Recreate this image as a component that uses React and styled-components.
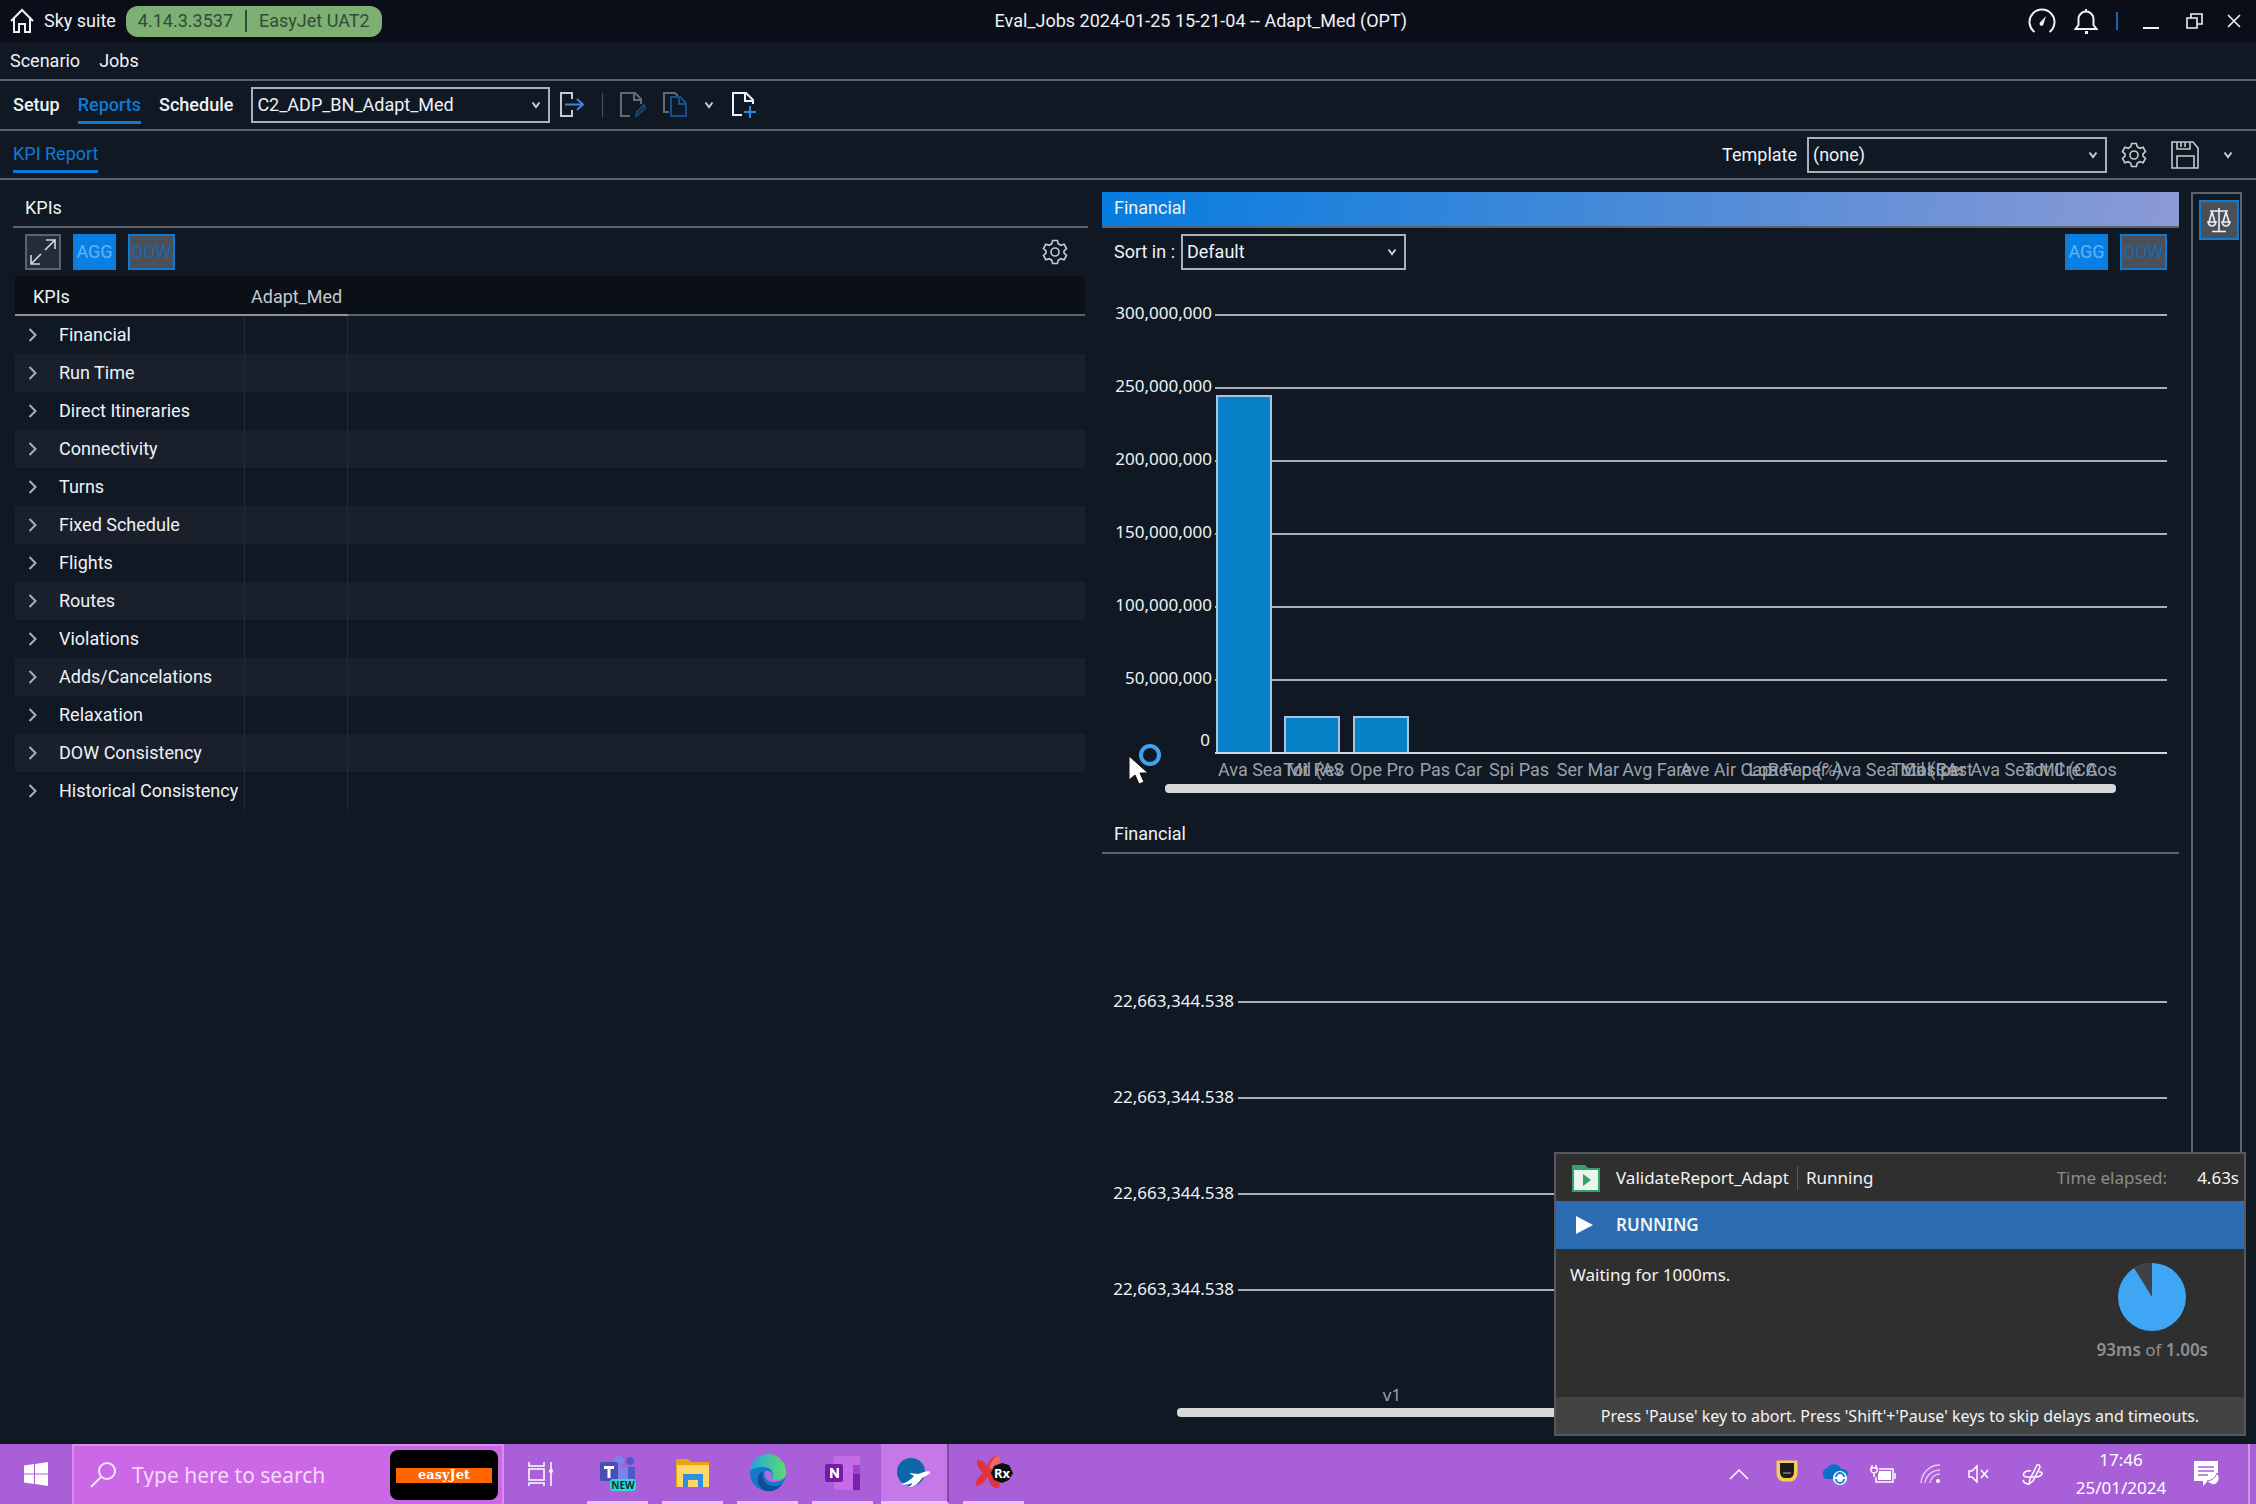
import React from "react";
import styled, { createGlobalStyle, css } from "styled-components";

const UI = 'Roboto, "Liberation Sans", sans-serif';
const OS = '"Noto Sans", "Open Sans", sans-serif';
const c = {
  bg: "#101824",
  title: "#0b0e18",
  line: "#5a626b",
  text: "#eef2f6",
  blue: "#0f7ad8",
  bar: "#0680c6",
  grid: "#a9afb8",
  dim: "#9aa1aa",
};

const Global = createGlobalStyle`
  *, *::before, *::after { box-sizing: border-box; }
  body { margin: 0; background: ${c.bg}; color: ${c.text}; font: 18px/24px ${UI}; }
  button, select, input { font: inherit; color: inherit; }
  button { background: none; border: 0; padding: 0; }
  svg { display: block; flex: none; }
`;

const Page = styled.div`
  min-height: 100vh;
  display: flex;
  flex-direction: column;
`;

/* ---------- title bar ---------- */
const TitleBar = styled.header`
  height: 42px;
  padding: 0 14px 0 10px;
  background: ${c.title};
  display: grid;
  grid-template-columns: auto 1fr auto;
  align-items: center;
`;
const TitleSide = styled.div`
  display: flex;
  align-items: center;
  gap: ${(p) => p.$gap}px;
`;
const WindowTitle = styled.h1`
  margin: 0;
  padding-right: 8px;
  text-align: center;
  font-size: 18px;
  line-height: 24px;
  font-weight: 400;
`;
const Version = styled.div`
  height: 31px;
  padding: 0 12px;
  border-radius: 12px;
  background: #7db072;
  color: #2f4c38;
  display: flex;
  align-items: center;
  gap: 12px;
`;
const Rule = styled.span`
  width: ${(p) => p.$w || 2}px;
  height: ${(p) => p.$h}px;
  background: ${(p) => p.$color};
`;
const IconButton = styled.button`
  display: grid;
  place-items: center;
  opacity: ${(p) => (p.$off ? 0.6 : 1)};
`;

/* ---------- bars ---------- */
const Bar = styled.nav`
  height: ${(p) => p.$h}px;
  padding: 0 ${(p) => p.$padEnd || p.$pad}px 0 ${(p) => p.$pad}px;
  border-bottom: 2px solid ${c.line};
  display: flex;
  align-items: center;
  gap: ${(p) => p.$gap}px;
`;
const MenuItem = styled.button`
  height: 24px;
`;
const Tab = styled.a`
  text-decoration: none;
  font-weight: ${(p) => (p.$strong ? 500 : 400)};
  color: ${(p) => (p.$on ? c.blue : c.text)};
  padding: 6px 0 4px;
  border-bottom: 3px solid ${(p) => (p.$on ? c.blue : "transparent")};
  border-radius: 1px;
`;
const Tools = styled.div`
  display: flex;
  align-items: center;
  gap: ${(p) => p.$gap}px;
  margin-left: ${(p) => (p.$end ? "auto" : "-9px")};
`;
const ToolGroup = styled.div`
  display: flex;
  align-items: center;
  gap: 24px;
`;
const SelectBox = styled.span`
  display: grid;
  align-items: center;
  width: ${(p) => p.$w}px;
  > * { grid-area: 1 / 1; }
  > svg { justify-self: end; margin-right: 9px; pointer-events: none; }
`;
const Select = styled.select`
  appearance: none;
  width: 100%;
  height: 36px;
  padding: 0 28px 0 4px;
  background: transparent;
  border: 2px solid #a9b0b8;
  border-radius: 0;
`;
const Field = styled.div`
  display: flex;
  align-items: center;
  gap: ${(p) => p.$gap}px;
`;

/* ---------- workspace ---------- */
const Main = styled.main`
  flex: 1;
  padding: 12px 14px 8px 13px;
  display: grid;
  grid-template-columns: minmax(0, 1075fr) 14px minmax(0, 1077fr) 12px 51px;
`;
const Panel = styled.section`
  position: relative;
  grid-column: ${(p) => p.$col};
  display: flex;
  flex-direction: column;
`;
const PanelTitle = styled.h2`
  margin: 0;
  height: 36px;
  flex: none;
  padding: 4px 12px 0;
  font-size: 18px;
  line-height: 24px;
  font-weight: 400;
  border-bottom: 2px solid ${c.line};
  ${(p) => p.$active && css`
    background: linear-gradient(100deg, #057ce0 0%, #4289d8 45%, #8d9ad6 100%) border-box;
  `}
`;
const PanelTools = styled.div`
  height: 48px;
  padding: 0 12px;
  padding-right: ${(p) => p.$pr}px;
  display: flex;
  align-items: center;
  gap: 12px;
`;
const Push = styled.span`
  margin-left: auto;
`;
const Square = styled.button`
  width: ${(p) => p.$w}px;
  height: 36px;
  display: grid;
  place-items: center;
  background: #252c37;
  border: 2px solid #5d636c;
`;
const Toggle = styled.button`
  width: ${(p) => p.$w}px;
  height: 36px;
  background: ${(p) => (p.$on ? "#087fe4" : "#4b4f57")};
  color: ${(p) => (p.$on ? "#62b3f4" : "#1769b4")};
  border: 2px solid #0f7bd4;
`;

const KpiTable = styled.table`
  margin: 0 3px 0 2px;
  border-collapse: separate;
  border-spacing: 0;
  table-layout: fixed;
`;
const HeadCell = styled.th`
  height: 40px;
  padding: 3px 0 0 ${(p) => p.$pl || 6}px;
  text-align: left;
  font-weight: 400;
  background: #0b1016;
  color: ${(p) => (p.$soft ? "#c5cad0" : c.text)};
  border-bottom: 2px solid ${(p) => (p.$bright ? "#8d939b" : c.line)};
`;
const Row = styled.tr`
  height: 38px;
  background: ${(p) => (p.$alt ? "#19202c" : "transparent")};
`;
const Cell = styled.td`
  padding: 0;
  border-right: ${(p) => (p.$edge ? "1px solid #232c36" : "0")};
`;
const RowToggle = styled.button`
  display: flex;
  align-items: center;
  gap: 21px;
  padding-left: 13px;
  white-space: nowrap;
`;

const Chart = styled.svg`
  width: 100%;
  height: auto;
  text { font-size: 17px; font-family: ${OS}; fill: ${c.text}; }
  text.cat { font-size: 18px; font-family: ${UI}; fill: ${c.dim}; }
  text.ser { fill: ${c.dim}; }
`;
const Rail = styled.aside`
  grid-column: 5;
  border: 2px solid ${c.line};
  border-bottom: 0;
  padding: 6px 0 0 6px;
`;
const RailButton = styled.button`
  width: 40px;
  height: 40px;
  display: grid;
  place-items: center;
  background: #4b4f57;
  border: 2px solid #0f7bd4;
`;
const Pointer = styled.svg`
  position: absolute;
  left: 26px;
  top: 550px;
`;

/* ---------- job popup ---------- */
const Popup = styled.section`
  position: fixed;
  right: 10px;
  bottom: 68px;
  width: 692px;
  height: 284px;
  border: 2px solid #56595c;
  background: #2f2f2f;
  font-family: ${OS};
  font-size: 17px;
  display: flex;
  flex-direction: column;
  color: #f4f4f4;
`;
const PopHead = styled.div`
  height: 47px;
  padding: 0 5px 0 16px;
  display: flex;
  align-items: center;
`;
const PopState = styled.div`
  height: 48px;
  padding-left: 20px;
  background: #2b6cb2;
  display: flex;
  align-items: center;
  gap: 22px;
  font-weight: 600;
`;
const PopBody = styled.div`
  flex: 1;
  padding: 14px 36px 0 14px;
  display: flex;
  justify-content: space-between;
  align-items: flex-start;
`;
const Progress = styled.div`
  display: flex;
  flex-direction: column;
  align-items: center;
  gap: 7px;
  color: #909090;
  b { font-weight: 600; }
`;
const PopFoot = styled.div`
  height: 37px;
  background: #434343;
  display: grid;
  place-items: center;
  font-size: 16px;
`;
const JobName = styled.span`
  margin-left: 16px;
  padding-right: 8px;
  margin-right: 8px;
  border-right: 1px solid #5a5a5a;
`;
const Elapsed = styled.span`
  margin-left: auto;
  margin-right: 30px;
  color: #8c8c8c;
`;

/* ---------- taskbar ---------- */
const Taskbar = styled.footer`
  height: 60px;
  background: #a95fd8;
  font-family: ${OS};
  display: flex;
  color: #fff;
`;
const TaskCell = styled.button`
  width: ${(p) => p.$w}px;
  margin-right: ${(p) => p.$mr || 0}px;
  height: 60px;
  display: grid;
  place-items: center;
`;
const AppCell = styled.button`
  width: ${(p) => p.$w || 61}px;
  height: 60px;
  margin-right: ${(p) => p.$mr}px;
  display: grid;
  place-items: center;
  background: ${(p) => (p.$active ? "#c678e8" : "transparent")};
  border-bottom: 3px solid #eebff8;
  border-right: ${(p) => (p.$active ? "2px solid #7d4aa6" : "0")};
`;
const Search = styled.label`
  flex: none;
  width: 432px;
  padding: 0 4px 0 16px;
  background: #cb68e6;
  border: 2px solid #d98bee;
  border-bottom: 0;
  display: flex;
  align-items: center;
  gap: 16px;
`;
const SearchInput = styled.input`
  flex: 1;
  min-width: 0;
  border: 0;
  padding: 0;
  background: none;
  font-size: 21px;
  &::placeholder { color: #f8d8ff; opacity: 1; }
`;
const Brand = styled.span`
  width: 108px;
  height: 50px;
  border-radius: 8px;
  background: #000;
  display: grid;
  align-content: center;
  padding: 0 6px;
`;
const BrandStripe = styled.span`
  height: 15px;
  background: #ff6600;
  color: #fff;
  text-align: center;
  font: 700 13px/13px "DejaVu Serif", serif;
`;
const Tray = styled.div`
  margin-left: auto;
  display: flex;
  align-items: center;
  padding-right: 6px;
`;
const TrayIcon = styled.button`
  width: ${(p) => p.$w || 48}px;
  height: 60px;
  display: grid;
  place-items: center;
`;
const Clock = styled.time`
  width: 116px;
  text-align: center;
  font-size: 17px;
  line-height: 28px;
`;
const Edge = styled.span`
  width: 2px;
  height: 60px;
  background: #cf9aea;
  margin-left: 15px;
`;

/* ---------- icons ---------- */
const Svg = ({ w = 24, h = w, vb, s = c.text, sw = 2, children, ...r }) => (
  <svg width={w} height={h} viewBox={vb || `0 0 ${w} ${h}`} fill="none" stroke={s} strokeWidth={sw} aria-hidden="true" {...r}>{children}</svg>
);
const Caret = () => <Svg w={10} h={8} s="#c8ced4"><path d="M1.500 1.500 5 6 8.500 1.500" /></Svg>;
const Home = () => <Svg w={24} h={26}><path d="M1 13 12 2l11 11M4 10.500V24h5v-8h6v8h5V10.500" /></Svg>;
const Gauge = () => <Svg w={28} h={26}><path d="M6.500 24A12.500 12.500 0 1 1 21.500 24" /><path d="M18 8 12 14.500a2 2 0 1 0 3.500 1.500z" fill={c.text} stroke="none" /></Svg>;
const Bell = () => <Svg w={24} h={26}><path d="M1.500 21h21l-3-4v-6a7.500 7.500 0 0 0-15 0v6zM12 3.500V1" /><path d="M11 24.500h3" strokeWidth="3" /></Svg>;
const Gear = () => (
  <Svg w={26} s="#c5cad0" sw={1.6}>
    <path d="M10.600 1.500h4.800l.8 3.300 2.600 1.500 3.300-1 2.400 4.200-2.500 2.300v2.400l2.500 2.300-2.400 4.200-3.300-1-2.600 1.500-.8 3.300h-4.800l-.8-3.300-2.600-1.500-3.300 1-2.400-4.200L4 14.200v-2.400L1.500 9.500l2.400-4.200 3.300 1 2.600-1.500z" />
    <circle cx="13" cy="13" r="4" />
  </Svg>
);
const Floppy = () => <Svg w={28} s="#c5cad0" sw={1.6}><path d="M1 1h21l5 6v20H1zM6 27V15h17v12M6 1v7h13V1M10 1v5M14 1v5" /></Svg>;
const Exit = () => <Svg w={26} h={26} s="#c5cad0"><path d="M13 7V1H2v23h11v-6" /><path d="M6 12.500h18M18 7l6 5.500-6 5.500" stroke="#3a86dc" /></Svg>;
const DocEdit = () => <Svg w={26} h={26} s="#9aa1aa"><path d="M10 24H1V1h14l6 6v5M14 1v7h7" /><path d="m16 24 1-4 7-7 1 3-7 7z" stroke="#1d62a8" /></Svg>;
const DocCopy = () => <Svg w={24} h={26} s="#9aa1aa"><path d="M6 20H1V1h11l3 3" /><path d="M8 5h9l6 6v13H8zM16 5v7h7" stroke="#2075cc" /></Svg>;
const DocAdd = () => <Svg w={26} h={26}><path d="M11 23H2V1h13l7 7v4M14 1v8h8" /><path d="M19 14v12M13 20h12" stroke="#2f86e4" /></Svg>;
const Expand = () => <Svg w={26} s="#d5d9de" sw={1.6}><path d="M15 11 25 1M16 1h9v9M11 15 1 25M1 16v9h9" /></Svg>;
const Chevron = () => <Svg w={10} h={14} s="#a9afb6"><path d="m1.500 1 6 6-6 6" /></Svg>;
const Scales = () => <Svg w={24} h={26} sw={1.6}><path d="M3 4h18M12 1v23M5 24.500h14M5 5 2 15M5 5l3 10M19 5l-3 10M19 5l3 10" /><path d="M1 15h8q-1 4-4 4t-4-4zM15 15h8q-1 4-4 4t-4-4z" /></Svg>;

const rows = ["Financial", "Run Time", "Direct Itineraries", "Connectivity", "Turns", "Fixed Schedule", "Flights", "Routes", "Violations", "Adds/Cancelations", "Relaxation", "DOW Consistency", "Historical Consistency"];
const ticks = ["300,000,000", "250,000,000", "200,000,000", "150,000,000", "100,000,000", "50,000,000"];
const cats = ["Tot Rev", "Ope Pro", "Pas Car", "Spi Pas", "Ser Mar", "Avg Fare", "Ave Air Cap", "Loa Fac (%)", "Rev per Ava Sea Mil (RA", "Total Cost", "Cos per Ava Sea Mil (CA", "Tot Cre Cos"];
const bars = [[115, 120, 358], [183, 441, 37], [252, 441, 37]];

const FinancialChart = () => (
  <Chart viewBox="0 0 1077 542" role="img" aria-label="Financial">
    {ticks.map((t, i) => (
      <g key={t}>
        <path d={`M113 ${39 + i * 73}H1065`} stroke={c.grid} strokeWidth="2" />
        <text x="110" y={43 + i * 73} textAnchor="end">{t}</text>
      </g>
    ))}
    <text x="108" y="470" textAnchor="end">0</text>
    {bars.map(([x, y, h]) => <rect key={x} x={x} y={y} width="54" height={h - 1} fill={c.bar} stroke="#a9c3de" strokeWidth="2" />)}
    <path d="M113 477H1065" stroke="#d3d7dc" strokeWidth="2" />
    <text className="cat" x="116" y="500">Ava Sea Mil (AS</text>
    {cats.map((t, i) => <text className="cat" key={t} x={211 + Math.round(i * 68.8)} y="500" textAnchor="middle">{t}</text>)}
    <rect x="63" y="508" width="951" height="9" rx="4" fill="#d6d8da" />
  </Chart>
);
const DetailChart = () => (
  <Chart viewBox="0 0 1077 580" role="img" aria-label="Financial detail">
    {[148, 244, 340, 436].map((y) => (
      <g key={y}>
        <path d={`M136 ${y}H1065`} stroke={c.grid} strokeWidth="2" />
        <text x="132" y={y + 5} textAnchor="end">22,663,344.538</text>
      </g>
    ))}
    <text className="ser" x="290" y="547" textAnchor="middle">v1</text>
    <rect x="75" y="554" width="951" height="9" rx="4" fill="#d6d8da" />
  </Chart>
);

export default function App() {
  return (
    <Page>
      <Global />
      <TitleBar>
        <TitleSide $gap={10}>
          <Home />
          <span>Sky suite</span>
          <Version><span>4.14.3.3537</span><Rule $h={22} $color="#2f4c38" /><span>EasyJet UAT2</span></Version>
        </TitleSide>
        <WindowTitle>Eval_Jobs 2024-01-25 15-21-04 -- Adapt_Med (OPT)</WindowTitle>
        <TitleSide $gap={18}>
          <IconButton aria-label="Performance"><Gauge /></IconButton>
          <IconButton aria-label="Notifications"><Bell /></IconButton>
          <Rule $h={18} $color="#1565b5" />
          <IconButton aria-label="Minimize"><Svg w={28} h={16}><path d="M7 15h16" /></Svg></IconButton>
          <IconButton aria-label="Restore"><Svg w={26} h={16} sw={1.6}><path d="M5 5h10v10H5zM9 5V1h11v10h-5" /></Svg></IconButton>
          <IconButton aria-label="Close"><Svg w={16} h={14} sw={1.6}><path d="m2 1 12 12M14 1 2 13" /></Svg></IconButton>
        </TitleSide>
      </TitleBar>

      <Bar $h={39} $pad={10} $gap={19}>
        <MenuItem>Scenario</MenuItem>
        <MenuItem>Jobs</MenuItem>
      </Bar>

      <Bar $h={50} $pad={13} $gap={18}>
        <Tab href="#setup" $strong>Setup</Tab>
        <Tab href="#reports" $strong $on>Reports</Tab>
        <Tab href="#schedule" $strong>Schedule</Tab>
        <SelectBox $w={299}>
          <Select aria-label="Scenario" defaultValue="a"><option value="a">C2_ADP_BN_Adapt_Med</option></Select>
          <Caret />
        </SelectBox>
        <Tools $gap={17}>
          <IconButton aria-label="Export"><Exit /></IconButton>
          <Rule $w={1} $h={24} $color="#4a525c" />
          <IconButton aria-label="Edit" $off><DocEdit /></IconButton>
          <IconButton aria-label="Copy" $off><DocCopy /></IconButton>
          <IconButton aria-label="More"><Caret /></IconButton>
          <IconButton aria-label="New"><DocAdd /></IconButton>
        </Tools>
      </Bar>

      <Bar $h={49} $pad={13} $padEnd={23} $gap={10}>
        <Tab href="#kpi" $on>KPI Report</Tab>
        <Tools $end $gap={14}>
          <Field $gap={10}>
            <label htmlFor="template">Template</label>
            <SelectBox $w={300}>
              <Select id="template" defaultValue="n"><option value="n">(none)</option></Select>
              <Caret />
            </SelectBox>
          </Field>
          <ToolGroup>
            <IconButton aria-label="Settings"><Gear /></IconButton>
            <IconButton aria-label="Save"><Floppy /></IconButton>
            <IconButton aria-label="Save options"><Caret /></IconButton>
          </ToolGroup>
        </Tools>
      </Bar>

      <Main>
        <Panel $col={1}>
          <PanelTitle>KPIs</PanelTitle>
          <PanelTools $pr={20}>
            <Square $w={36} aria-label="Expand"><Expand /></Square>
            <Toggle $w={43} $on>AGG</Toggle>
            <Toggle $w={47}>DOW</Toggle>
            <Push />
            <IconButton aria-label="KPI settings"><Gear /></IconButton>
          </PanelTools>
          <KpiTable>
            <colgroup><col width="230" /><col width="103" /><col /></colgroup>
            <thead>
              <tr>
                <HeadCell $pl={18} $bright>KPIs</HeadCell>
                <HeadCell $soft $bright>Adapt_Med</HeadCell>
                <HeadCell />
              </tr>
            </thead>
            <tbody>
              {rows.map((r, i) => (
                <Row key={r} $alt={i % 2 === 1}>
                  <Cell $edge><RowToggle><Chevron />{r}</RowToggle></Cell>
                  <Cell $edge />
                  <Cell />
                </Row>
              ))}
            </tbody>
          </KpiTable>
        </Panel>

        <Panel $col={3}>
          <PanelTitle $active>Financial</PanelTitle>
          <PanelTools $pr={12}>
            <Field $gap={6}>
              <label htmlFor="sort">Sort in :</label>
              <SelectBox $w={225}>
                <Select id="sort" defaultValue="d"><option value="d">Default</option></Select>
                <Caret />
              </SelectBox>
            </Field>
            <Push />
            <Toggle $w={43} $on>AGG</Toggle>
            <Toggle $w={47}>DOW</Toggle>
          </PanelTools>
          <FinancialChart />
          <PanelTitle>Financial</PanelTitle>
          <DetailChart />
          <Pointer width="50" height="50" viewBox="0 0 50 50" aria-hidden="true">
            <circle cx="22" cy="13" r="9" fill="none" stroke="#3fa2ee" strokeWidth="4" />
            <path d="M1 14v24l6-5 4 9 5-2-4-9h8z" fill="#fff" stroke="#111" strokeWidth="1" />
          </Pointer>
        </Panel>

        <Rail>
          <RailButton aria-label="Compare"><Scales /></RailButton>
        </Rail>
      </Main>

      <Popup>
        <PopHead>
          <Svg w={28} h={28} sw={0}>
            <path d="M0 1h13l3 3h12v24H0z" fill="#35a165" />
            <path d="M2 6h24v20H2z" fill="#e9f5ee" />
            <path d="m11 10 8 6-8 6z" fill="#35a165" />
          </Svg>
          <JobName>ValidateReport_Adapt</JobName>
          <span>Running</span>
          <Elapsed>Time elapsed:</Elapsed>
          <span>4.63s</span>
        </PopHead>
        <PopState><Svg w={18} h={18} sw={0}><path d="m0 0 17 9-17 9z" fill="#fff" /></Svg>RUNNING</PopState>
        <PopBody>
          <span>Waiting for 1000ms.</span>
          <Progress>
            <Svg w={68} sw={0}><circle cx="34" cy="34" r="34" fill="#3fa5f5" /><path d="M34 34V0A34 34 0 0 0 16 5z" fill="#3e4145" /></Svg>
            <span><b>93ms</b> of <b>1.00s</b></span>
          </Progress>
        </PopBody>
        <PopFoot>Press 'Pause' key to abort. Press 'Shift'+'Pause' keys to skip delays and timeouts.</PopFoot>
      </Popup>

      <Taskbar>
        <TaskCell $w={72} aria-label="Start">
          <Svg w={24} h={24} sw={0}><path d="M0 3.500 10 2v9.500H0zM11 2l13-2v11.500H11zM0 12.500h10V22L0 20.500zM11 12.500h13V24l-13-2z" fill="#fff" /></Svg>
        </TaskCell>
        <Search>
          <Svg w={26} h={26} s="#fbe2ff"><circle cx="17" cy="9" r="8" /><path d="M11 15 1 25" /></Svg>
          <SearchInput type="search" placeholder="Type here to search" aria-label="Type here to search" />
          <Brand><BrandStripe>easyJet</BrandStripe></Brand>
        </Search>
        <TaskCell $w={74} $mr={9} aria-label="Task view">
          <Svg w={26} h={26} s="#fff" sw={1.5}><path d="M1 1v4h15V1M1 8h15v11H1zM1 25v-3h15v3M23 1v24" /><circle cx="23" cy="10" r="2" fill="#fff" stroke="none" /></Svg>
        </TaskCell>
        <AppCell $mr={14} aria-label="Teams">
          <Svg w={38} h={36} sw={0}>
            <circle cx="31" cy="6" r="4" fill="#5059c9" /><circle cx="20" cy="6" r="5" fill="#7b83eb" />
            <path d="M25 12h11v12h-9z" fill="#5059c9" /><path d="M12 12h17v18H12z" fill="#7b83eb" />
            <rect x="1" y="7" width="18" height="19" rx="2" fill="#4650b5" />
            <path d="M5 11h10v3h-3.500v9h-3v-9H5z" fill="#fff" />
            <rect x="11" y="24" width="26" height="12" rx="3" fill="#35d6d6" />
            <text x="24" y="34" fontSize="10" fontWeight="700" fill="#08313a" textAnchor="middle">NEW</text>
          </Svg>
        </AppCell>
        <AppCell $mr={14} aria-label="File Explorer">
          <Svg w={34} h={30} sw={0}>
            <path d="M0 1h12l3 3h18v25H0z" fill="#e8a317" /><path d="M1 7h32v22H1z" fill="#ffd766" />
            <path d="M7 16h20v13h-5v-7H12v7H7z" fill="#2f8fe0" />
          </Svg>
        </AppCell>
        <AppCell $mr={14} aria-label="Edge">
          <Svg w={38} h={38} sw={0}>
            <defs>
              <linearGradient id="edgeTop" x1="0" y1="0" x2="1" y2="0"><stop offset="0" stopColor="#22a3e0" /><stop offset="1" stopColor="#5ddc6c" /></linearGradient>
            </defs>
            <circle cx="19" cy="19" r="18" fill="#1478cf" />
            <path d="M1 17A18 18 0 0 1 37 19c0 6-5 8-9 8-3 0-6-1-5-3 2-4 0-11-8-11C8 13 3 15 1 17z" fill="url(#edgeTop)" />
            <path d="M14 17c-2 8 3 16 13 15l6-2c-5 8-15 9-20 5-6-5-6-14 1-18z" fill="#0e4f96" />
            <path d="M16 17c-2 6 3 12 10 11l7-2c2-1 3-3 3-4-2 3-6 4-9 4-4 0-5-1-4-3 1-3-2-7-7-6z" fill="#b66ae0" />
          </Svg>
        </AppCell>
        <AppCell $mr={8} aria-label="OneNote">
          <Svg w={36} h={34} sw={0}>
            <rect x="9" y="0" width="26" height="34" rx="2" fill="#c46be6" /><path d="M28 9h7v9h-7z" fill="#a63fd0" /><path d="M28 18h7v16h-7z" fill="#7a22a8" />
            <rect x="0" y="8" width="18" height="18" rx="2" fill="#7719aa" />
            <path d="M5 22V12h2.500l4 6v-6H14v10h-2.500l-4-6v6z" fill="#fff" />
          </Svg>
        </AppCell>
        <AppCell $w={68} $mr={14} $active aria-label="Sky suite">
          <Svg w={34} h={32} sw={0}>
            <circle cx="14" cy="15" r="14" fill="#0b67a8" />
            <path d="M4 27c6-1 10-5 13-8l-5-3 9 1 6-2c5-2 8 0 5 2l-7 4c-3 5-8 9-13 9 2-1 3-3 3-4-4 2-8 2-11 1z" fill="#fff" />
          </Svg>
        </AppCell>
        <AppCell aria-label="Ranorex">
          <Svg w={38} h={34} sw={0}>
            <path d="M2 4c4-1 8 2 10 7 2-7 6-12 12-11 3 5-1 10-6 13 5 5 8 12 6 19-7 1-10-5-11-12C10 26 6 30 1 30c-1-6 3-9 7-13C4 13 1 9 2 4z" fill="#e0343c" />
            <path d="M14 12c2-7 5-12 10-12 3 5-1 10-6 13z" fill="#f0696a" />
            <path d="m27 7 7 2 4 8-4 7-7 3-8-3-3-7 3-7z" fill="#0c0c0c" />
            <text x="27" y="22" fontSize="13" fontWeight="700" fill="#fff" textAnchor="middle">Rx</text>
          </Svg>
        </AppCell>
        <Tray>
          <TrayIcon aria-label="Show hidden icons"><Svg w={20} h={12} s="#fff" sw={1.5}><path d="m1 11 9-9 9 9" /></Svg></TrayIcon>
          <TrayIcon aria-label="Port"><Svg w={24} h={28} s="#f5cf55" sw={3}><path d="M3 2h18v10q0 7-5 8H8q-5-1-5-8z" fill="#f5cf55" /><path d="M5 3h14v8q0 6-4 7H9q-4-1-4-7z" fill="#1d1d1d" stroke="none" /><path d="M8 13h8" stroke="#666" strokeWidth="2" /></Svg></TrayIcon>
          <TrayIcon aria-label="OneDrive"><Svg w={26} h={24} sw={0}><path d="M4 17a6 6 0 0 1 1-11 8 8 0 0 1 14 1 5 5 0 0 1 3 10z" fill="#0a70c8" /><circle cx="18" cy="16" r="7" fill="#fff" /><path d="M14 15a4 4 0 0 1 8 0M22 17a4 4 0 0 1-8 0" fill="none" stroke="#1d7fd6" strokeWidth="2" /></Svg></TrayIcon>
          <TrayIcon aria-label="Battery"><Svg w={26} h={20} s="#fff" sw={1.5}><path d="M9 5h14v13H6v-5M25 9v6" /><path d="M9 7h12v9H8v-5z" fill="#fff" stroke="none" /><path d="M2 1v3M6 1v3M1 4h6v3q-1 2-3 2T1 7zM4 9v4" /></Svg></TrayIcon>
          <TrayIcon aria-label="Wi-Fi"><Svg w={22} h={22} s="#e9c4f6" sw={1.5}><path d="M1 20A19 19 0 0 1 20 2M5 20A15 15 0 0 1 20 7M10 20a10 10 0 0 1 10-9" /><circle cx="18" cy="18" r="2" fill="#fff" stroke="none" /></Svg></TrayIcon>
          <TrayIcon aria-label="Volume muted"><Svg w={24} h={20} s="#fff" sw={1.5}><path d="M2 7h3l5-5v16l-5-5H2zM14 6l7 8M21 6l-7 8" /></Svg></TrayIcon>
          <TrayIcon $w={60} aria-label="Pen"><Svg w={22} h={22} s="#fff" sw={1.5}><path d="M8 16 15 2q3-1 3 2l-7 14-4 3zM9 8C2 7-1 13 4 14h9c8 0 9-6 4-5M7 21q-5 0-6-4" /></Svg></TrayIcon>
          <Clock>17:46<br />25/01/2024</Clock>
          <TrayIcon $w={54} aria-label="Action centre"><Svg w={28} h={26} sw={0}><path d="M2 0h24v20H16l-5 5v-5H2z" fill="#fff" /><path d="M6 6h16M6 10h16M6 14h10" stroke="#a95fd8" strokeWidth="1.500" /><path d="M25 12q-2 7-10 8 8 8 12-1 1-4-2-7z" fill="#fff" stroke="#a95fd8" strokeWidth="1" /></Svg></TrayIcon>
          <Edge />
        </Tray>
      </Taskbar>
    </Page>
  );
}
